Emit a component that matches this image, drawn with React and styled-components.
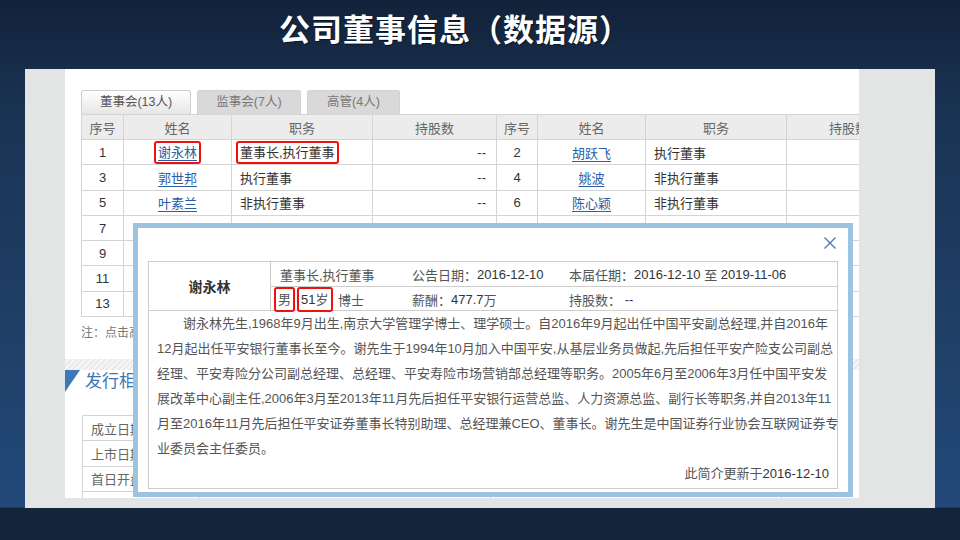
import React from "react";
import styled, { createGlobalStyle } from "styled-components";

const GlobalStyle = createGlobalStyle`
	html, body {
		margin: 0;
		padding: 0;
		width: 960px;
		height: 540px;
		overflow: hidden;
	}
	body {
		font-family: "Liberation Sans", "Noto Sans CJK SC", sans-serif;
	}
`;

const Slide = styled.div`
	width: 960px;
	height: 540px;
	display: flex;
	flex-direction: column;
	background: linear-gradient(
		180deg,
		#12223a 0%,
		#1a3353 20%,
		#1f3f66 60%,
		#23497a 93.9%,
		#13243b 94.1%,
		#13233a 100%
	);
`;

const Title = styled.h1`
	margin: 0;
	height: 69px;
	box-sizing: border-box;
	padding: 9px 0 0 279px;
	font-family: "Noto Sans CJK SC", sans-serif;
	font-size: 31px;
	font-weight: 700;
	line-height: 38px;
	color: #fff;
	letter-spacing: 1px;
	text-shadow: 1px 1px 1px rgba(0, 0, 0, 0.5);
`;

const Shot = styled.div`
	position: relative;
	margin: 0 25px;
	height: 439px;
	display: flex;
	background: #e3e5e4;
`;

const SideStrip = styled.div`
	width: ${(p) => p.$w}px;
	flex-shrink: 0;
	background: #e3e5e4;
`;

const Page = styled.div`
	width: 794px;
	height: 429px;
	flex-shrink: 0;
	overflow: hidden;
	background: #fff;
	box-sizing: border-box;
	padding: 21px 0 0 16px;
	font-size: 13px;
	color: #333;
`;

const Tabs = styled.div`
	display: flex;
	gap: 6px;
	height: 24px;
`;

const Tab = styled.div`
	width: ${(p) => p.$w}px;
	box-sizing: border-box;
	height: 24px;
	border: 1px solid ${(p) => (p.$active ? "#cfcfcf" : "#d2d2d2")};
	border-bottom: none;
	border-radius: 3px 3px 0 0;
	background: ${(p) =>
		p.$active ? "linear-gradient(180deg, #ffffff, #e6e6e6)" : "#d9d9d9"};
	color: ${(p) => (p.$active ? "#555" : "#777")};
	font-size: 12.5px;
	line-height: 23px;
	text-align: center;
`;

const Grid = styled.table`
	border-collapse: collapse;
	table-layout: fixed;
	width: 829px;
	font-size: 13px;
`;

const Col = styled.col`
	width: ${(p) => p.$w}px;
`;

const Th = styled.th`
	height: 24px;
	padding: 0;
	border: 1px solid #d4d4d4;
	background: #ececec;
	color: #666;
	font-weight: 400;
	text-align: center;
	white-space: nowrap;
	overflow: hidden;
`;

const Td = styled.td`
	height: 24.3px;
	padding: 0 ${(p) => (p.$align === "right" ? "10px" : "8px")};
	border: 1px solid #d4d4d4;
	text-align: ${(p) => p.$align || "center"};
	color: #333;
	white-space: nowrap;
	overflow: hidden;
`;

const NameLink = styled.a`
	color: #2a5da6;
	text-decoration: underline;
	text-underline-offset: 3px;
	cursor: pointer;
`;

const RedBox = styled.span`
	display: inline-block;
	line-height: ${(p) => (p.$tall ? 19 : 17)}px;
	padding: 1px 2px;
	margin: 0 ${(p) => (p.$tall ? 0 : -4)}px;
	border: 2px solid #f01010;
	border-radius: 3px;
`;

const Note = styled.div`
	margin-top: 8px;
	line-height: 16px;
	font-size: 12px;
	color: #777;
`;

const Stripe = styled.div`
	margin: 18px 0 0 -16px;
	height: 11px;
	background: repeating-linear-gradient(
		135deg,
		#ebebeb 0 2px,
		#f6f6f6 2px 4px
	);
`;

const SectionHead = styled.div`
	margin-left: -16px;
	height: 26px;
	display: flex;
	align-items: flex-start;
	gap: 5px;
`;

const Corner = styled.div`
	width: 0;
	height: 0;
	border-top: 22px solid #3d78b8;
	border-right: 15px solid transparent;
`;

const SectionTitle = styled.div`
	font-size: 17px;
	line-height: 24px;
	color: #3f74b5;
`;

const InfoGrid = styled.table`
	margin: 19px 0 0 1px;
	border-collapse: collapse;
	table-layout: fixed;
	width: 700px;
	font-size: 13px;
`;

const InfoTd = styled.td`
	height: 24.3px;
	padding: 0 8px;
	border: 1px solid #d4d4d4;
	color: #666;
	width: ${(p) => p.$w || "auto"};
	white-space: nowrap;
`;

/* popup */

const Popup = styled.div`
	position: absolute;
	left: 108px;
	top: 154px;
	width: 720px;
	height: 274px;
	box-sizing: border-box;
	border: 5px solid #9cc3e0;
	background: #fff;
	padding: 0 10px 3px;
	display: flex;
	flex-direction: column;
	font-size: 13px;
	color: #555;
`;

const PopHead = styled.div`
	height: 33px;
	display: flex;
	justify-content: flex-end;
	align-items: center;
	padding: 0 2px 4px 0;
	box-sizing: border-box;
`;

const Person = styled.div`
	display: grid;
	grid-template-columns: 122px 1fr;
	border: 1px solid #cdcdcd;
`;

const PersonName = styled.div`
	grid-row: span 2;
	display: flex;
	align-items: center;
	justify-content: center;
	font-size: 14px;
	font-weight: 700;
	color: #333;
	border-right: 1px solid #cdcdcd;
`;

const PersonRow = styled.div`
	display: grid;
	grid-template-columns: ${(p) => 132 + 9 - p.$pad}px 157px 1fr;
	height: ${(p) => p.$h}px;
	align-items: center;
	padding-left: ${(p) => p.$pad}px;
	border-bottom: ${(p) => (p.$last ? "none" : "1px solid #cdcdcd")};
`;

const Field = styled.span`
	white-space: nowrap;
	color: #555;
	display: flex;
	align-items: center;
	gap: ${(p) => (p.$gap ? p.$gap : 0)}px;
	b {
		font-weight: 400;
		color: #333;
	}
`;

const Bio = styled.div`
	flex: 1;
	border: 1px solid #cdcdcd;
	border-top: none;
	padding: 0 8px 2px;
	line-height: 25px;
	color: #555;
	b {
		font-weight: 400;
		color: #333;
	}
`;

const BioLine = styled.div`
	white-space: nowrap;
	padding-left: ${(p) => (p.$indent ? "26px" : "0")};
`;

const Updated = styled.div`
	text-align: right;
	white-space: nowrap;
`;

const CloseIcon = () => (
	<svg width="12" height="12" viewBox="0 0 12 12">
		<path
			d="M0.5 0.5 L11.5 11.5 M11.5 0.5 L0.5 11.5"
			stroke="#4a76b2"
			strokeWidth="1.3"
			fill="none"
		/>
	</svg>
);

// rows below the popup only show their numbers
const rows = [
	[1, "谢永林", "董事长,执行董事", 2, "胡跃飞", "执行董事"],
	[3, "郭世邦", "执行董事", 4, "姚波", "非执行董事"],
	[5, "叶素兰", "非执行董事", 6, "陈心颖", "非执行董事"],
	[7, "蔡方方", "非执行董事", 8, "韩小京", "独立董事"],
	[9, "", "", 10, "", ""],
	[11, "", "", 12, "", ""],
	[13, "", "", "", "", ""],
];

const bio = [
	"谢永林先生,1968年9月出生,南京大学管理学博士、理学硕士。自2016年9月起出任中国平安副总经理,并自2016年",
	"12月起出任平安银行董事长至今。谢先生于1994年10月加入中国平安,从基层业务员做起,先后担任平安产险支公司副总",
	"经理、平安寿险分公司副总经理、总经理、平安寿险市场营销部总经理等职务。2005年6月至2006年3月任中国平安发",
	"展改革中心副主任,2006年3月至2013年11月先后担任平安银行运营总监、人力资源总监、副行长等职务,并自2013年11",
	"月至2016年11月先后担任平安证券董事长特别助理、总经理兼CEO、董事长。谢先生是中国证券行业协会互联网证券专",
	"业委员会主任委员。",
];

const headers = [
	["序号", 42],
	["姓名", 108],
	["职务", 141],
	["持股数", 124],
	["序号", 41],
	["姓名", 108],
	["职务", 141],
	["持股数", 124],
];

const Cells = ({ no, name, duty, mark, shares }) => (
	<>
		<Td>{no}</Td>
		<Td>
			{name &&
				(mark ? (
					<RedBox>
						<NameLink>{name}</NameLink>
					</RedBox>
				) : (
					<NameLink>{name}</NameLink>
				))}
		</Td>
		<Td $align="left">{mark ? <RedBox>{duty}</RedBox> : duty}</Td>
		<Td $align="right">{shares ? "--" : ""}</Td>
	</>
);

const App = () => {
	return (
		<Slide>
			<GlobalStyle />
			<Title>公司董事信息（数据源）</Title>
			<Shot>
				<SideStrip $w={40} />
				<Page>
					<Tabs>
						<Tab $w={110} $active>
							董事会(13人)
						</Tab>
						<Tab $w={104}>监事会(7人)</Tab>
						<Tab $w={93}>高管(4人)</Tab>
					</Tabs>
					<Grid>
						<colgroup>
							{headers.map(([, w], i) => (
								<Col key={i} $w={w} />
							))}
						</colgroup>
						<thead>
							<tr>
								{headers.map(([h], i) => (
									<Th key={i}>{h}</Th>
								))}
							</tr>
						</thead>
						<tbody>
							{rows.map((r, i) => (
								<tr key={i}>
									<Cells
										no={r[0]}
										name={r[1]}
										duty={r[2]}
										mark={i === 0}
										shares={i < 4}
									/>
									<Cells no={r[3]} name={r[4]} duty={r[5]} shares={i < 4} />
								</tr>
							))}
						</tbody>
					</Grid>
					<Note>注：点击高管姓名可查看高管简历</Note>
					<Stripe />
					<SectionHead>
						<Corner />
						<SectionTitle>发行相关信息</SectionTitle>
					</SectionHead>
					<InfoGrid>
						<tbody>
							{["成立日期", "上市日期", "首日开盘价", "发行市盈率"].map((t) => (
								<tr key={t}>
									<InfoTd $w="100px">{t}</InfoTd>
									<InfoTd />
									<InfoTd />
								</tr>
							))}
						</tbody>
					</InfoGrid>
				</Page>
				<SideStrip $w={76} />

				<Popup>
					<PopHead>
						<CloseIcon />
					</PopHead>
					<Person>
						<PersonName>谢永林</PersonName>
						<PersonRow $h={24} $pad={9}>
							<Field>董事长,执行董事</Field>
							<Field>
								公告日期：<b>2016-12-10</b>
							</Field>
							<Field>
								本届任期：<b>2016-12-10</b>&nbsp;至&nbsp;<b>2019-11-06</b>
							</Field>
						</PersonRow>
						<PersonRow $h={23} $pad={3} $last>
							<Field $gap={2}>
								<RedBox $tall>男</RedBox>
								<RedBox $tall>
									<b>51</b>岁
								</RedBox>
								<span>&nbsp;博士</span>
							</Field>
							<Field>
								薪酬：<b>477.7</b>万
							</Field>
							<Field>
								持股数：&nbsp;<b>--</b>
							</Field>
						</PersonRow>
					</Person>
					<Bio>
						{bio.map((line, i) => (
							<BioLine key={i} $indent={i === 0}>
								{line}
							</BioLine>
						))}
						<Updated>
							此简介更新于<b>2016-12-10</b>
						</Updated>
					</Bio>
				</Popup>
			</Shot>
		</Slide>
	);
};

export default App;
